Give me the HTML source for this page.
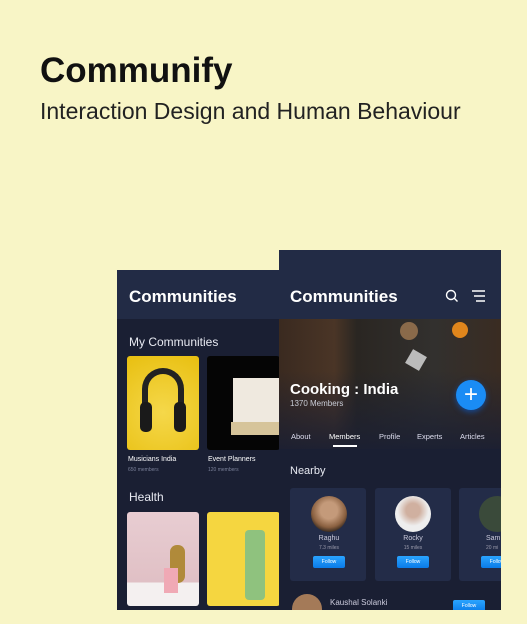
<!DOCTYPE html>
<html><head><meta charset="utf-8"><style>
*{margin:0;padding:0;box-sizing:border-box}
body{width:527px;height:610px;background:#f8f5c6;font-family:"Liberation Sans",sans-serif;position:relative;overflow:hidden}
.a{position:absolute}
.t1{left:40px;top:51px;font-size:35px;font-weight:bold;color:#111}
.t2{left:40px;top:98px;font-size:23px;color:#222}
.ph{background:#1a1f33}
.hd{background:#222b45}
.w{color:#fff}
.card{background:#232c48;border-radius:3px}
.fb{background:linear-gradient(#2aa4ff,#0a7be8);border-radius:2px;color:#fff;font-size:5px;text-align:center;line-height:12px}
.av{border-radius:50%}
.clipL{position:absolute;left:0;top:0;width:527px;height:610px;clip-path:inset(270px 240px 0 117px)}
.clipR{position:absolute;left:0;top:0;width:527px;height:610px;clip-path:inset(250px 26px 0 279px)}
</style></head><body>
<div class="a t1">Communify</div>
<div class="a t2">Interaction Design and Human Behaviour</div>

<div class="clipL">
<div class="a ph" style="left:117px;top:270px;width:170px;height:340px"></div>
<div class="a hd" style="left:117px;top:270px;width:170px;height:49px"></div>
<div class="a w" style="left:129px;top:287px;font-size:17px;font-weight:bold">Communities</div>
<div class="a" style="left:129px;top:335px;font-size:12px;color:#e8eaf2">My Communities</div>
<div class="a" style="left:127px;top:356px;width:72px;height:94px;border-radius:3px;background:radial-gradient(circle at 50% 60%,#f5d84a,#e8bf10)"></div>
<div class="a" style="left:142px;top:368px;width:42px;height:50px;border:6px solid #222;border-bottom:none;border-radius:22px 22px 0 0"></div>
<div class="a" style="left:140px;top:402px;width:12px;height:30px;background:#1a1a1a;border-radius:5px"></div>
<div class="a" style="left:174px;top:402px;width:12px;height:30px;background:#1a1a1a;border-radius:5px"></div>
<div class="a" style="left:207px;top:356px;width:73px;height:94px;border-radius:3px;background:#050505"></div>
<div class="a" style="left:233px;top:378px;width:46px;height:45px;background:#efe9df"></div>
<div class="a" style="left:231px;top:422px;width:48px;height:13px;background:#d6c49a"></div>
<div class="a w" style="left:128px;top:456px;font-size:7px">Musicians India</div>
<div class="a" style="left:128px;top:467px;font-size:5px;color:#7a8099">650 members</div>
<div class="a w" style="left:208px;top:456px;font-size:7px">Event Planners</div>
<div class="a" style="left:208px;top:467px;font-size:5px;color:#7a8099">120 members</div>
<div class="a" style="left:129px;top:490px;font-size:12px;color:#e8eaf2">Health</div>
<div class="a" style="left:127px;top:512px;width:72px;height:94px;border-radius:3px;background:linear-gradient(#e8cdd2,#e0c0c5 75%,#f4f0f0 75%)"></div>
<div class="a" style="left:170px;top:545px;width:15px;height:38px;border-radius:7px;background:#b08a3a"></div>
<div class="a" style="left:164px;top:568px;width:14px;height:25px;background:#f0a9b5"></div>
<div class="a" style="left:207px;top:512px;width:73px;height:94px;border-radius:3px;background:#f5d640"></div>
<div class="a" style="left:245px;top:530px;width:20px;height:70px;border-radius:4px;background:#8fc27e"></div>
</div>

<div class="clipR">
<div class="a ph" style="left:279px;top:250px;width:222px;height:360px"></div>
<div class="a hd" style="left:279px;top:250px;width:222px;height:69px"></div>
<div class="a w" style="left:290px;top:287px;font-size:17px;font-weight:bold">Communities</div>
<svg class="a" style="left:445px;top:289px" width="14" height="14" viewBox="0 0 14 14"><circle cx="6" cy="6" r="4.5" fill="none" stroke="#fff" stroke-width="1.4"/><path d="M9.3 9.3L12.5 12.5" stroke="#fff" stroke-width="1.4"/></svg>
<svg class="a" style="left:472px;top:290px" width="14" height="12"><path d="M0 1H13M2 6H13M4 11H13" stroke="#fff" stroke-width="1.4"/></svg>
<div class="a" style="left:279px;top:319px;width:222px;height:130px;background:linear-gradient(90deg,#3a2a20 0%,#4a3526 25%,#2a2622 35%,#32302e 70%,#3a2c22 100%)"></div>
<div class="a" style="left:279px;top:319px;width:222px;height:130px;background:linear-gradient(rgba(26,31,51,0) 40%,rgba(26,31,51,.9))"></div>
<div class="a" style="left:400px;top:322px;width:18px;height:18px;border-radius:50%;background:#8a6a4a"></div>
<div class="a" style="left:452px;top:322px;width:16px;height:16px;border-radius:50%;background:#e0861c"></div>
<div class="a" style="left:408px;top:352px;width:16px;height:16px;background:#bbb;transform:rotate(30deg)"></div>
<div class="a w" style="left:290px;top:381px;font-size:15px;font-weight:bold">Cooking : India</div>
<div class="a" style="left:290px;top:399px;font-size:8px;color:#c8ccd6">1370 Members</div>
<div class="a" style="left:456px;top:380px;width:30px;height:30px;border-radius:50%;background:#1a8cf5;color:#fff;font-size:24px;text-align:center;line-height:29px;box-shadow:0 2px 6px rgba(0,110,255,.5)">+</div>
<div class="a" style="left:291px;top:432px;font-size:7.5px;color:#dde">About</div>
<div class="a w" style="left:329px;top:432px;font-size:7.5px">Members</div>
<div class="a" style="left:333px;top:445px;width:24px;height:2px;background:#fff"></div>
<div class="a" style="left:379px;top:432px;font-size:7.5px;color:#dde">Profile</div>
<div class="a" style="left:417px;top:432px;font-size:7.5px;color:#dde">Experts</div>
<div class="a" style="left:460px;top:432px;font-size:7.5px;color:#dde">Articles</div>
<div class="a" style="left:290px;top:465px;font-size:11px;color:#e8eaf2">Nearby</div>
<div class="a card" style="left:290px;top:488px;width:76px;height:93px"></div>
<div class="a card" style="left:375px;top:488px;width:76px;height:93px"></div>
<div class="a card" style="left:459px;top:488px;width:60px;height:93px"></div>
<div class="a av" style="left:311px;top:496px;width:36px;height:36px;background:radial-gradient(circle at 50% 40%,#c49a7a 30%,#8a6040 60%,#111 85%)"></div>
<div class="a av" style="left:395px;top:496px;width:36px;height:36px;background:radial-gradient(circle at 50% 40%,#d0b0a0 25%,#eee 55%)"></div>
<div class="a av" style="left:479px;top:496px;width:36px;height:36px;background:#3a4a3a"></div>
<div class="a" style="left:317px;top:535px;font-size:7px;color:#ccd;width:24px;text-align:center">Raghu</div>
<div class="a" style="left:317px;top:545px;font-size:5px;color:#99a;width:24px;text-align:center">7.3 miles</div>
<div class="a" style="left:400px;top:535px;font-size:7px;color:#ccd;width:26px;text-align:center">Rocky</div>
<div class="a" style="left:400px;top:545px;font-size:5px;color:#99a;width:26px;text-align:center">15 miles</div>
<div class="a" style="left:486px;top:535px;font-size:7px;color:#ccd">Sam</div>
<div class="a" style="left:486px;top:545px;font-size:5px;color:#99a">20 mi</div>
<div class="a fb" style="left:313px;top:556px;width:32px;height:12px">Follow</div>
<div class="a fb" style="left:397px;top:556px;width:32px;height:12px">Follow</div>
<div class="a fb" style="left:481px;top:556px;width:32px;height:12px">Follow</div>
<div class="a av" style="left:292px;top:594px;width:30px;height:30px;background:#a47a58"></div>
<div class="a" style="left:330px;top:598px;font-size:8px;color:#ccd">Kaushal Solanki</div>
<div class="a fb" style="left:453px;top:600px;width:32px;height:12px">Follow</div>
</div>
</body></html>
